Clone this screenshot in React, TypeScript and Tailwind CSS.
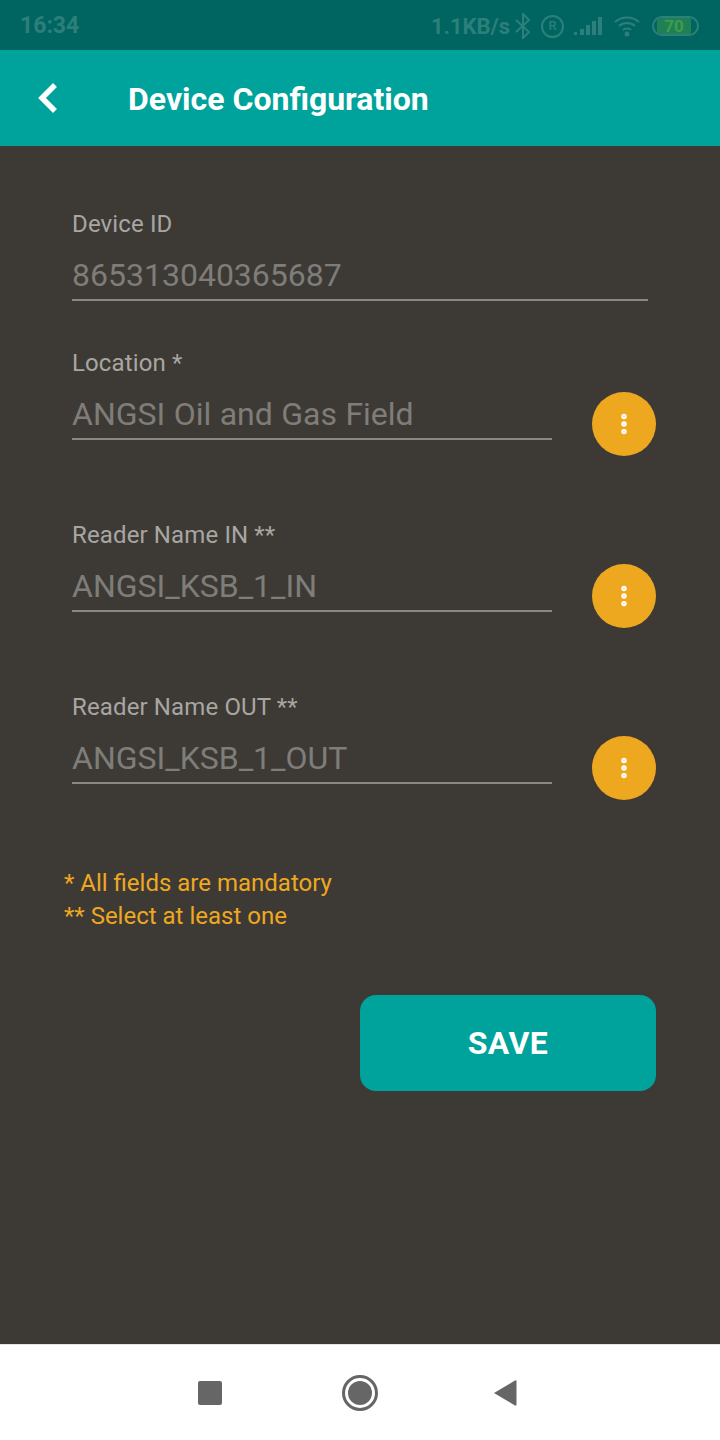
import { EllipsisVertical } from "lucide-react";

const font = "font-['Roboto',sans-serif]";

function Field({ label, value, withButton }: { label: string; value: string; withButton?: boolean }) {
    return (
        <div className="flex items-start">
            <div className={withButton ? "w-[480px]" : "w-[576px]"}>
                <div className="text-[24px] leading-[26px] text-[#a8a6a2] tracking-[0.13px]">{label}</div>
                <div className="mt-[14px] h-[50px] border-b-2 border-[#8a8781] text-[32px] leading-[48px] text-[#7f7d79] [word-spacing:0.5px]">{value}</div>
            </div>
            {withButton && (
                <div className="ml-[40px] mt-[42px] w-[64px] h-[64px] rounded-full bg-[#eea820] flex items-center justify-center">
                    <EllipsisVertical size={26} strokeWidth={3} color="#ffffff" />
                </div>
            )}
        </div>
    );
}

export default function App() {
    return (
        <div className={`${font} w-[720px] h-[1440px] flex flex-col bg-white overflow-hidden`}>
            <div className="h-[50px] bg-[#006560] flex items-center justify-between pl-[20px] pr-[21px] pt-[2px] text-[#2c7f7b] font-bold">
                <span className="text-[23px]">16:34</span>
                <div className="flex items-center">
                    <span className="text-[22px]">1.1KB/s</span>
                    <svg width="18" height="26" viewBox="0 0 18 26" fill="none" stroke="#2c7f7b" strokeWidth="2" className="ml-[4px]">
                        <path d="M2 7l13 12-6 6V1l6 6L2 19" />
                    </svg>
                    <div className="ml-[9px] w-[23px] h-[23px] rounded-full border-2 border-[#2c7f7b] flex items-center justify-center text-[13px] font-medium">R</div>
                    <svg width="28" height="20" viewBox="0 0 28 20" fill="#2c7f7b" className="ml-[10px]">
                        <rect x="0" y="16" width="3" height="3" />
                        <rect x="6" y="13" width="4" height="6" />
                        <rect x="12" y="9" width="4" height="10" />
                        <rect x="18" y="5" width="4" height="14" />
                        <rect x="24" y="1" width="4" height="18" />
                    </svg>
                    <svg width="26" height="22" viewBox="0 0 26 22" fill="none" stroke="#2c7f7b" strokeWidth="2" className="ml-[12px]">
                        <path d="M1 7c7-6 17-6 24 0M5 11c4.500-4 11.500-4 16 0M9 15c2-2 6-2 8 0" />
                        <circle cx="13" cy="19" r="1.500" fill="#2c7f7b" />
                    </svg>
                    <div className="ml-[12px] w-[47px] h-[20px] rounded-full border-2 border-[#2c7f7b] flex items-center overflow-hidden">
                        <div className="w-[34px] h-full ml-[3px] bg-[#1f7f55] flex items-center justify-center text-[17px] leading-none text-[#3f9c4a]">70</div>
                    </div>
                </div>
            </div>
            <div className="h-[96px] bg-[#00a39b] flex items-center text-white">
                <svg width="24" height="34" viewBox="0 0 24 34" fill="none" stroke="#ffffff" strokeWidth="5.500" className="ml-[34px]">
                    <path d="M21 4L8 17l13 13" />
                </svg>
                <span className="ml-[70px] pt-[1px] text-[32px] font-bold">Device Configuration</span>
            </div>
            <div className="h-[1198px] bg-[#3d3a36] pl-[72px] pt-[65px]">
                <Field label="Device ID" value="865313040365687" />
                <div className="mt-[49px] flex flex-col gap-[66px]">
                    <Field label="Location *" value="ANGSI Oil and Gas Field" withButton />
                    <Field label="Reader Name IN **" value="ANGSI_KSB_1_IN" withButton />
                    <Field label="Reader Name OUT **" value="ANGSI_KSB_1_OUT" withButton />
                </div>
                <div className="-ml-[8px] mt-[67px] text-[24px] leading-[33px] text-[#eea820]">
                    <div>* All fields are mandatory</div>
                    <div>** Select at least one</div>
                </div>
                <div className="mt-[62px] ml-[288px] w-[296px] h-[96px] rounded-[16px] bg-[#00a39b] flex items-center justify-center text-white text-[32px] font-bold tracking-[0.4px]">SAVE</div>
            </div>
            <div className="flex-1 bg-white border-t border-[#e4e4e4] flex items-center">
                <div className="ml-[198px] w-[24px] h-[24px] rounded-[2px] bg-[#666666]" />
                <div className="ml-[120px] w-[36px] h-[36px] rounded-full border-[3px] border-[#666666] flex items-center justify-center">
                    <div className="w-[24px] h-[24px] rounded-full bg-[#666666]" />
                </div>
                <svg width="24" height="28" viewBox="0 0 24 28" fill="#666666" className="ml-[115px]">
                    <path d="M22 1.500c.8-.4 1.500 0 1.500 1v23c0 1-.7 1.400-1.500 1L1 14z" />
                </svg>
            </div>
        </div>
    );
}
